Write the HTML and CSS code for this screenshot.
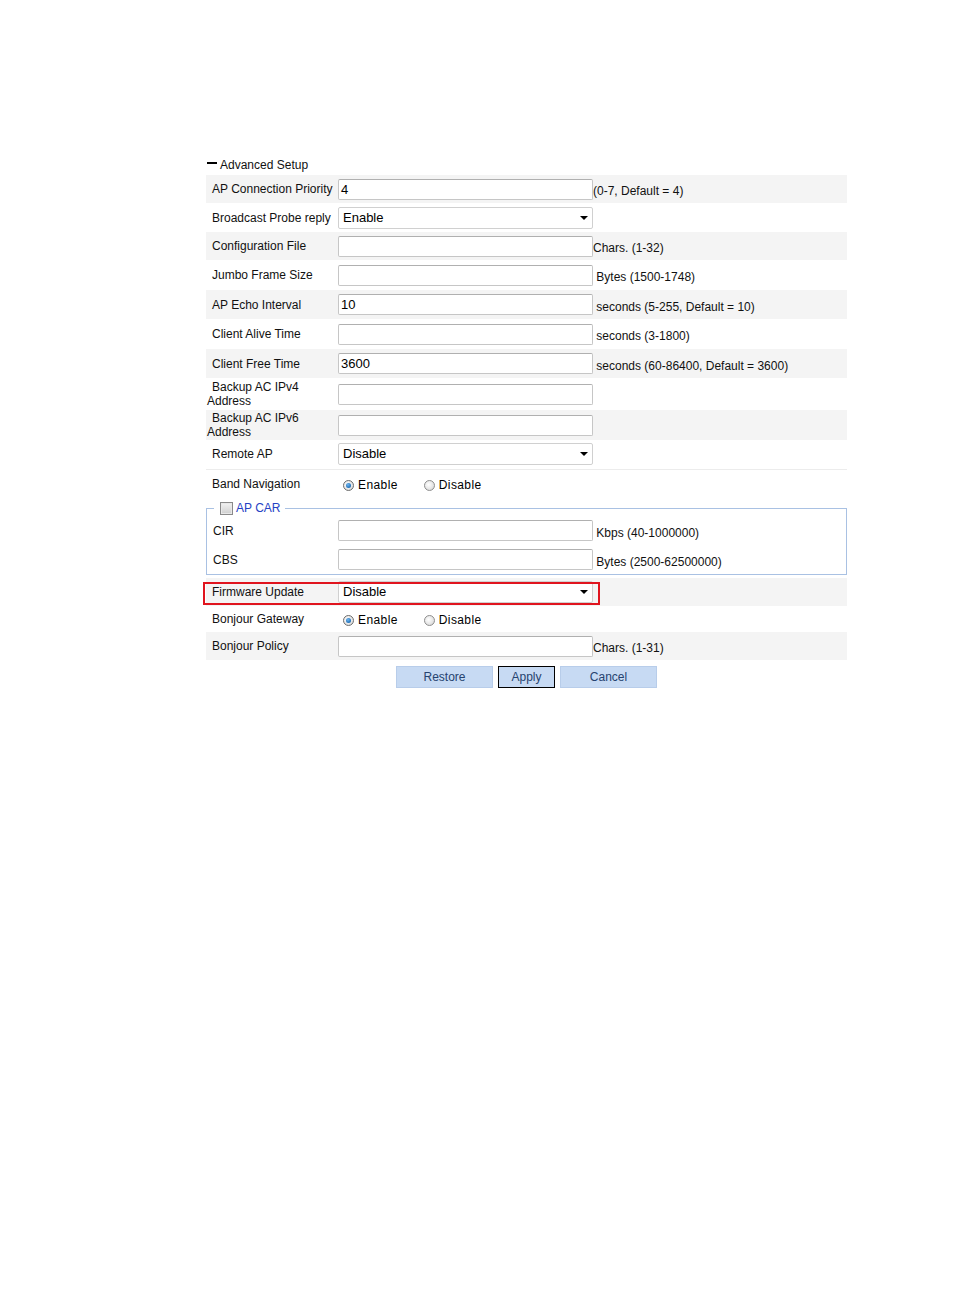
FILE: index.html
```html
<!DOCTYPE html>
<html>
<head>
<meta charset="utf-8">
<link rel="stylesheet" href="styles.css">
</head>
<body>
<div class="page">
  <div class="section-head"><span class="minus"></span><span>Advanced Setup</span></div>
  <table class="form">
    <colgroup><col class="c1"><col class="c2"><col class="c3"></colgroup>
    <tr class="gray h28"><td class="lbl">AP Connection Priority</td><td class="ctl"><div class="inp">4</div></td><td class="hint">(0-7, Default = 4)</td></tr>
    <tr class="h29"><td class="lbl">Broadcast Probe reply</td><td class="ctl"><div class="sel">Enable<span class="arrow"></span></div></td><td class="hint"></td></tr>
    <tr class="gray h28"><td class="lbl">Configuration File</td><td class="ctl"><div class="inp"></div></td><td class="hint">Chars. (1-32)</td></tr>
    <tr class="h30"><td class="lbl">Jumbo Frame Size</td><td class="ctl"><div class="inp"></div></td><td class="hint">&nbsp;Bytes (1500-1748)</td></tr>
    <tr class="gray h29"><td class="lbl">AP Echo Interval</td><td class="ctl"><div class="inp">10</div></td><td class="hint">&nbsp;seconds (5-255, Default = 10)</td></tr>
    <tr class="h30"><td class="lbl">Client Alive Time</td><td class="ctl"><div class="inp"></div></td><td class="hint">&nbsp;seconds (3-1800)</td></tr>
    <tr class="gray h29"><td class="lbl">Client Free Time</td><td class="ctl"><div class="inp">3600</div></td><td class="hint">&nbsp;seconds (60-86400, Default = 3600)</td></tr>
    <tr class="h32"><td class="lbl wrap">Backup AC IPv4<br>Address</td><td class="ctl"><div class="inp"></div></td><td class="hint"></td></tr>
    <tr class="gray h30"><td class="lbl wrap">Backup AC IPv6<br>Address</td><td class="ctl"><div class="inp"></div></td><td class="hint"></td></tr>
    <tr class="h29 sep"><td class="lbl">Remote AP</td><td class="ctl"><div class="sel">Disable<span class="arrow"></span></div></td><td class="hint"></td></tr>
    <tr class="h30"><td class="lbl">Band Navigation</td><td class="ctl"><div class="radios"><span class="radio on"></span><span class="rtxt">Enable</span><span class="radio"></span><span class="rtxt">Disable</span></div></td><td class="hint"></td></tr>
  </table>
  <fieldset class="car">
    <legend><span class="check"></span><span class="legtxt">AP CAR</span></legend>
    <table class="form inner">
      <colgroup><col class="c1i"><col class="c2"><col class="c3"></colgroup>
      <tr class="h29"><td class="lbl">CIR</td><td class="ctl"><div class="inp"></div></td><td class="hint">&nbsp;Kbps (40-1000000)</td></tr>
      <tr class="h29"><td class="lbl">CBS</td><td class="ctl"><div class="inp"></div></td><td class="hint">&nbsp;Bytes (2500-62500000)</td></tr>
    </table>
  </fieldset>
  <table class="form">
    <colgroup><col class="c1"><col class="c2"><col class="c3"></colgroup>
    <tr class="gray h28"><td class="lbl mark">Firmware Update<span class="redbox"></span></td><td class="ctl"><div class="sel">Disable<span class="arrow"></span></div></td><td class="hint"></td></tr>
    <tr class="h26"><td class="lbl">Bonjour Gateway</td><td class="ctl"><div class="radios"><span class="radio on"></span><span class="rtxt">Enable</span><span class="radio"></span><span class="rtxt">Disable</span></div></td><td class="hint"></td></tr>
    <tr class="gray h28"><td class="lbl">Bonjour Policy</td><td class="ctl"><div class="inp"></div></td><td class="hint">Chars. (1-31)</td></tr>
  </table>
  <div class="buttons">
    <button class="btn wide">Restore</button>
    <button class="btn focus">Apply</button>
    <button class="btn wide">Cancel</button>
  </div>
</div>
</body>
</html>
```
FILE: styles.css
```css
html, body {
  margin: 0;
  padding: 0;
  background: #fff;
}
body {
  font-family: "Liberation Sans", Arial, sans-serif;
  font-size: 12px;
  color: #111;
}
.page {
  width: 641px;
  margin-left: 206px;
  padding-top: 154px;
}
.section-head {
  height: 21px;
  display: flex;
  align-items: center;
  color: #111;
}
.minus {
  width: 10px;
  height: 2px;
  background: #000;
  margin-left: 1px;
  margin-right: 3px;
  margin-bottom: 4px;
}
.form {
  width: 641px;
  border-collapse: collapse;
  table-layout: fixed;
}
.form td {
  padding: 0;
  vertical-align: middle;
}
.c1 { width: 132px; }
.c1i { width: 131px; }
.c2 { width: 255px; }
.gray td { background: #f4f4f4; }
.h26 { height: 26px; }
.h28 { height: 28px; }
.h29 { height: 29px; }
.h30 { height: 30px; }
.h32 { height: 32px; }
.sep td { border-bottom: 1px solid #ececec; }
.lbl {
  padding-left: 1px !important;
  text-indent: 5px;
  line-height: 14px;
  white-space: nowrap;
}
.wrap { padding-bottom: 1px; }
.ctl { line-height: 0; }
.hint {
  padding-top: 4px !important;
  white-space: nowrap;
}
.inp, .sel {
  box-sizing: border-box;
  width: 255px;
  height: 21px;
  border: 1px solid #c6c6c6;
  border-top-color: #b0b0b0;
  border-radius: 2px;
  background: #fff;
  font-size: 13px;
  line-height: 19px;
  padding-left: 2px;
  color: #000;
  position: relative;
}
.sel {
  height: 22px;
  line-height: 20px;
  padding-left: 4px;
  border-color: #d0d0d0;
}
.arrow {
  position: absolute;
  right: 4px;
  top: 8px;
  width: 0;
  height: 0;
  border-left: 4px solid transparent;
  border-right: 4px solid transparent;
  border-top: 4px solid #000;
}
.radios {
  display: flex;
  align-items: center;
  padding-left: 5px;
  padding-top: 2px;
  line-height: 14px;
  font-size: 12px;
  letter-spacing: 0.4px;
}
.radio {
  box-sizing: border-box;
  width: 11px;
  height: 11px;
  border-radius: 50%;
  border: 1px solid #8f8f8f;
  background: radial-gradient(circle at 40% 40%, #ffffff 0%, #e4e4e4 60%, #c8c8c8 100%);
  display: flex;
  align-items: center;
  justify-content: center;
}
.radio.on {
  border-color: #6e6e6e;
}
.radio.on::after {
  content: "";
  width: 5px;
  height: 5px;
  border-radius: 50%;
  background: radial-gradient(circle at 40% 35%, #6fb6f0 0%, #1f6fb8 70%, #134c86 100%);
}
.rtxt {
  margin-left: 4px;
  margin-right: 26px;
  color: #000;
}
.car {
  margin: 2px 0 3px 0;
  padding: 0;
  border: 1px solid #a9c1e3;
  min-inline-size: 0;
}
.car legend {
  margin-left: 7px;
  padding: 0 5px 0 6px;
  display: flex;
  align-items: center;
  height: 14px;
  line-height: 14px;
}
.check {
  box-sizing: border-box;
  width: 13px;
  height: 13px;
  border: 1px solid #8a8a8a;
  background: linear-gradient(#f2f2f2, #cfcfcf);
  box-shadow: inset 0 0 0 1px #e8e8e8;
}
.legtxt {
  margin-left: 3px;
  color: #2541c4;
  font-size: 12px;
}
.inner {
  width: 639px;
  margin-top: 1px;
}
.mark { position: relative; }
.redbox {
  position: absolute;
  left: -3px;
  top: 4px;
  width: 397px;
  height: 23px;
  border: 2px solid #e0141e;
  box-sizing: border-box;
  z-index: 2;
}
.buttons {
  display: flex;
  justify-content: center;
  gap: 5px;
  margin-top: 6px;
}
.btn {
  box-sizing: border-box;
  height: 22px;
  width: 57px;
  border: 1px solid #b8cdea;
  background: #c7daf3;
  color: #26436f;
  font-family: "Liberation Sans", Arial, sans-serif;
  font-size: 12px;
  padding: 0;
}
.btn.wide { width: 97px; }
.btn.focus { border-color: #000; }
```
